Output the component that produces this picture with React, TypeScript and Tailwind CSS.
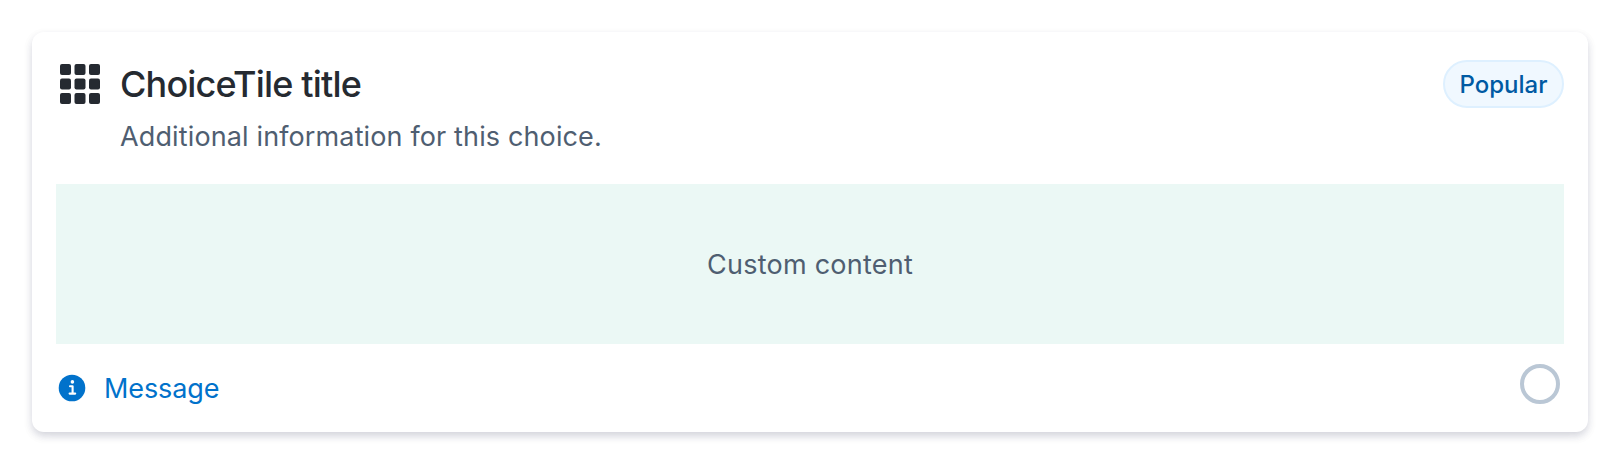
const cells = [0, 14.5, 29];

function GridIcon() {
  return (
    <svg viewBox="0 0 48 48" className="size-12 shrink-0 fill-[#252a31]" aria-hidden="true">
      {cells.map((y) =>
        cells.map((x) => <rect key={`${x}-${y}`} x={4 + x} y={4 + y} width="11" height="11" rx="2" />),
      )}
    </svg>
  );
}

function InfoIcon() {
  return (
    <svg viewBox="0 0 32 32" className="size-8 shrink-0" aria-hidden="true">
      <circle cx="16" cy="16" r="13.3" fill="#0172cb" />
      <circle cx="16.4" cy="9.9" r="1.8" fill="#fff" />
      <path d="M14 14.3h2.6v7.4M13.6 21.6h5.6" fill="none" stroke="#fff" strokeWidth="2.1" strokeLinecap="round" strokeLinejoin="round" />
    </svg>
  );
}

export default function App() {
  return (
    <div className="h-[464px] bg-white p-8 font-['Inter',sans-serif]">
      <div className="flex h-[400px] flex-col rounded-xl bg-white px-6 pt-7 shadow-[0_4px_8px_-1px_rgba(37,42,77,0.18),0_4px_12px_0_rgba(37,42,77,0.06)]">
        <header className="flex h-[124px] items-start">
          <GridIcon />
          <div className="ml-4 flex-1">
            <h3 className="h-12 text-[36px] leading-[49px] font-medium tracking-[-0.82px] text-[#252a31]">ChoiceTile title</h3>
            <p className="mt-2 text-[27px] leading-[42px] tracking-[0.13px] text-[#4f5e71]">Additional information for this choice.</p>
          </div>
          <span className="flex h-12 w-[121px] items-center justify-center rounded-full border-2 border-[#def0ff] bg-[#f0f8ff] pt-0.5 text-2xl font-medium text-[#005aa3]">
            Popular
          </span>
        </header>
        <div className="flex h-40 items-center justify-center bg-[#ebf8f5] pt-[3px] text-[27px] tracking-[0.24px] text-[#4f5e71]">
          <span>Custom content</span>
        </div>
        <footer className="mt-5 flex h-12 items-start justify-between pr-1">
          <div className="flex h-12 items-center gap-4 text-[27px] tracking-[-0.1px] text-[#0172cb]">
            <InfoIcon />
            <span className="pt-[3px]">Message</span>
          </div>
          <span role="radio" aria-checked="false" className="size-10 rounded-full border-4 border-[#bac7d5] bg-white" />
        </footer>
      </div>
    </div>
  );
}
